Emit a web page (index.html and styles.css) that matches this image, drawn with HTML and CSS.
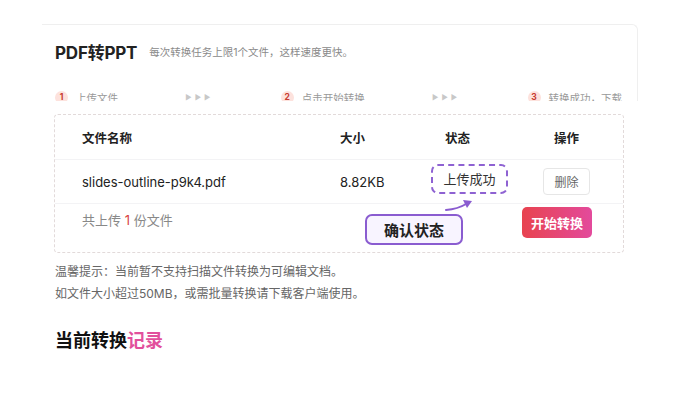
FILE: index.html
```html
<!DOCTYPE html>
<html lang="zh-CN">
<head>
<meta charset="utf-8">
<title>PDF转PPT</title>
<link rel="stylesheet" href="styles.css">
</head>
<body>
<div class="page">
  <section class="card">
    <div class="head">
      <h1 class="title">PDF转PPT</h1>
      <span class="sub">每次转换任务上限1个文件，这样速度更快。</span>
    </div>
    <div class="steps">
      <div class="step"><span class="num">1</span><span>上传文件</span></div>
      <div class="arrows">▶▶▶</div>
      <div class="step"><span class="num">2</span><span>点击开始转换</span></div>
      <div class="arrows">▶▶▶</div>
      <div class="step"><span class="num">3</span><span>转换成功，下载</span></div>
    </div>
  </section>

  <section class="box">
    <div class="row row-head">
      <div>文件名称</div>
      <div>大小</div>
      <div class="c-status">状态</div>
      <div class="c-ops">操作</div>
    </div>
    <div class="row row-body">
      <div>slides-outline-p9k4.pdf</div>
      <div>8.82KB</div>
      <div class="c-status"><span class="status">上传成功</span></div>
      <div class="c-ops"><button class="del">删除</button></div>
    </div>
    <div class="foot">
      <div class="count">共上传 <span class="red">1</span> 份文件</div>
      <button class="start">开始转换</button>
    </div>
    <div class="callout">确认状态</div>
    <svg class="arrow" width="40" height="20" viewBox="0 0 40 20">
      <path d="M2 16 Q14 15 22 10" fill="none" stroke="#8a5cd0" stroke-width="2" stroke-linecap="round"/>
      <path d="M19 6 L28 7 L23 14 Z" fill="#8a5cd0"/>
    </svg>
  </section>

  <div class="notes">
    <p>温馨提示：当前暂不支持扫描文件转换为可编辑文档。</p>
    <p>如文件大小超过50MB，或需批量转换请下载客户端使用。</p>
  </div>

  <h2 class="records">当前转换<span class="pink">记录</span></h2>
</div>
</body>
</html>
```

FILE: styles.css
```css
* { box-sizing: border-box; }
html, body { margin: 0; padding: 0; background: #fff; }
body {
  font-family: "Inter", "Noto Sans CJK SC", sans-serif;
  color: #222;
  width: 700px;
  height: 395px;
  overflow: hidden;
}
.page { display: flex; flex-direction: column; }

.card {
  margin: 24px 0 0 42px;
  width: 596px;
  height: 77px;
  overflow: hidden;
  border-top: 1px solid #efefef;
  border-right: 1px solid #efefef;
  border-top-right-radius: 6px;
  padding: 0 13px;
}
.head {
  display: flex;
  align-items: center;
  margin-top: 14px;
  height: 24px;
}
.title {
  margin: 0;
  font-size: 17px;
  font-weight: 700;
  color: #222;
  letter-spacing: -0.2px;
}
.sub {
  margin-left: 12px;
  font-size: 10.5px;
  color: #8a8a8a;
}
.steps {
  display: flex;
  justify-content: space-between;
  align-items: center;
  margin-top: 26px;
  height: 16px;
  padding-right: 2px;
}
.step {
  display: flex;
  align-items: center;
  gap: 8px;
  font-size: 10.5px;
  color: #999;
}
.num {
  width: 13px;
  height: 13px;
  border-radius: 50%;
  background: #fde2dd;
  color: #c7392f;
  font-size: 8.5px;
  font-weight: 700;
  display: flex;
  align-items: center;
  justify-content: center;
}
.arrows {
  font-size: 7px;
  color: #c8c8c8;
  letter-spacing: 3px;
}

.box {
  position: relative;
  margin: 13px 0 0 54px;
  width: 570px;
  height: 139px;
  border: 1px dashed #e2dada;
  border-radius: 4px;
}
.row {
  display: grid;
  grid-template-columns: 258px 91px 79px 1fr;
  align-items: center;
  padding-left: 27px;
  border-bottom: 1px solid #f3f3f5;
  font-size: 12.5px;
  color: #222;
}
.row-head { height: 45px; font-weight: 700; font-size: 12.5px; }
.row-body { height: 44px; font-size: 13px; }
.row-head .c-status { padding-left: 14px; }
.c-ops { display: flex; justify-content: center; }
.status {
  display: inline-flex;
  align-items: center;
  justify-content: center;
  width: 77px;
  height: 30px;
  margin-top: -6px;
  border: 2px dashed #8e62d2;
  border-radius: 7px;
  font-size: 13px;
  color: #333;
}
.del {
  font-family: inherit;
  width: 47px;
  height: 27px;
  border: 1px solid #e6e6e6;
  border-radius: 4px;
  background: #fff;
  font-size: 12px;
  color: #666;
  padding: 0;
}
.foot {
  display: flex;
  justify-content: space-between;
  align-items: flex-start;
  padding: 3px 31px 0 27px;
}
.count {
  margin-top: 4px;
  line-height: 18px;
  font-size: 13px;
  color: #888;
}
.red { color: #d9443f; }
.start {
  font-family: inherit;
  width: 70px;
  height: 31px;
  border: none;
  border-radius: 5px;
  background: linear-gradient(90deg, #e8434f, #e34a9c);
  color: #fff;
  font-size: 13px;
  font-weight: 700;
  padding: 0;
}
.callout {
  position: absolute;
  left: 310px;
  top: 99px;
  width: 98px;
  height: 31px;
  border: 2px solid #8a5cd0;
  border-radius: 7px;
  background: #f8f4ff;
  display: flex;
  align-items: center;
  justify-content: center;
  font-size: 15px;
  font-weight: 700;
  color: #222;
}
.arrow {
  position: absolute;
  left: 389px;
  top: 79px;
}

.notes { margin: 8px 0 0 55px; }
.notes p {
  margin: 0;
  line-height: 22px;
  font-size: 12px;
  color: #666;
}
.records {
  margin: 23px 0 0 55px;
  font-size: 18px;
  line-height: 26px;
  font-weight: 700;
  color: #111;
}
.pink { color: #e2509c; }
```
